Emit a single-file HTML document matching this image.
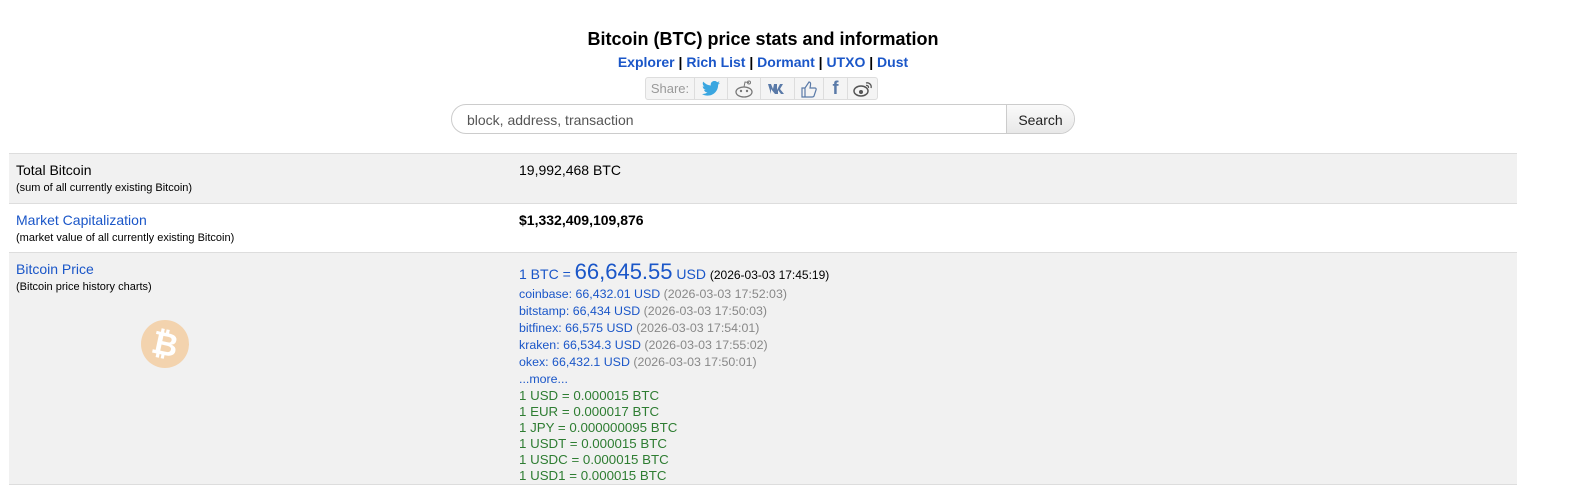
<!DOCTYPE html>
<html><head><meta charset="utf-8"><style>
body{margin:0;background:#fff;font-family:"Liberation Sans",Arial,sans-serif;color:#000;width:1584px;height:493px;overflow:hidden;position:relative}
a{color:#1a56c8;text-decoration:none}
.h{position:absolute;left:0;width:1526px;text-align:center}
h1{font-size:18px;margin:0;top:29px}
.nav{top:54px;font-size:14px;font-weight:bold}
.share{position:absolute;left:645px;top:77px;height:21px;border:1px solid #ddd;border-radius:3px;background:#f4f4f4;display:flex}
.share span{border-right:1px solid #ddd;display:flex;align-items:center;justify-content:center;height:21px}
.share span:last-child{border:none}
.search{position:absolute;left:451px;top:104px;width:622px;height:28px;border:1px solid #ccc;border-radius:15px;overflow:hidden;display:flex}
.search .in{flex:1;font-size:14px;color:#555;padding:7px 0 0 15px}
.search .b{width:67px;border-left:1px solid #ccc;background:linear-gradient(#fafafa,#e8e8e8);font-size:14px;padding-top:7px;text-align:center;color:#222}
table{position:absolute;left:9px;top:153px;width:1508px;border-collapse:collapse}
td{vertical-align:top;border-top:1px solid #ddd;border-bottom:1px solid #ddd;padding:8px 0 0 7px;font-size:14px}
td:nth-child(2){padding-left:5px}
small{font-size:11px}
.g{color:#888}
.gr{color:#2e7d32;font-size:13.3px;line-height:16px}
.ex{font-size:12.4px;line-height:17px;color:#1a56c8}
</style></head><body>
<h1 class="h">Bitcoin (BTC) price stats and information</h1>
<div class="h nav"><a>Explorer</a> | <a>Rich List</a> | <a>Dormant</a> | <a>UTXO</a> | <a>Dust</a></div>
<div class="share">
<span style="width:48px;font-size:13px;color:#999">Share:</span>
<span style="width:32px"><svg width="18" height="15" viewBox="0 0 24 20"><path d="M24 2.4a10 10 0 0 1-2.8.8A5 5 0 0 0 23.3.4a10 10 0 0 1-3.1 1.2A4.9 4.9 0 0 0 11.8 6 14 14 0 0 1 1.7.9a4.9 4.9 0 0 0 1.5 6.6A5 5 0 0 1 1 6.9a4.9 4.9 0 0 0 3.9 4.8 5 5 0 0 1-2.2.1 4.9 4.9 0 0 0 4.6 3.4A9.9 9.9 0 0 1 0 17.3 14 14 0 0 0 7.5 19.5c9 0 14-7.5 14-14v-.6A10 10 0 0 0 24 2.4z" fill="#3aa6e0"/></svg></span>
<span style="width:32px"><svg width="22" height="18" viewBox="0 0 22 18"><ellipse cx="11" cy="12" rx="8" ry="5" fill="none" stroke="#777" stroke-width="1.3"/><circle cx="8" cy="11" r="1.2" fill="#777"/><circle cx="14" cy="11" r="1.2" fill="#777"/><circle cx="16" cy="2.5" r="1.5" fill="none" stroke="#777"/><path d="M11 7 12 2l4 .5" fill="none" stroke="#777"/></svg></span>
<span style="width:33px"><svg width="22" height="12" viewBox="0 0 22 12"><path d="M1 1h3l2 5 1-5h3v6l3-6h3l-3 5 4 5h-3l-3-4v4h-3l-4-5v5H4z" fill="#5a7aa8"/></svg></span>
<span style="width:28px"><svg width="18" height="18" viewBox="0 0 18 18"><path d="M2 8h3v9H2zM5 8l4-6c1 0 2 1 1.5 3L10 8h5c1 0 1.5 1 1 2l-2 6c-.3.7-1 1-2 1H5" fill="none" stroke="#5a7aa8" stroke-width="1.2"/></svg></span>
<span style="width:23px;color:#5a7aa8;font-weight:bold;font-size:18px">f</span>
<span style="width:29px"><svg width="20" height="16" viewBox="0 0 20 16"><ellipse cx="8" cy="10" rx="7" ry="5" fill="none" stroke="#555" stroke-width="1.5"/><circle cx="8" cy="11" r="2" fill="#555"/><path d="M13 2a4 4 0 0 1 5 5M13 4.5a2 2 0 0 1 2.5 2.5" fill="none" stroke="#555" stroke-width="1.3"/></svg></span>
</div>
<div class="search"><div class="in">block, address, transaction</div><div class="b">Search</div></div>
<table>
<tr style="background:#f1f1f1;height:50px"><td style="width:498px">Total Bitcoin<br><small>(sum of all currently existing Bitcoin)</small></td><td>19,992,468 BTC</td></tr>
<tr style="height:49px"><td><a>Market Capitalization</a><br><small>(market value of all currently existing Bitcoin)</small></td><td><b>$1,332,409,109,876</b></td></tr>
<tr style="background:#f1f1f1;height:232px"><td><a>Bitcoin Price</a><br><small>(Bitcoin price history charts)</small>
<div style="margin:27px 0 0 125px;width:48px;height:48px;border-radius:50%;background:#f3d3ae;color:#fff;font-size:32px;font-weight:bold;text-align:center;line-height:48px;transform:rotate(12deg)">₿</div></td>
<td style="padding-top:8px"><div style="color:#1a56c8;line-height:22px"><span style="font-size:14px">1 BTC = </span><span style="font-size:22px">66,645.55</span> <span style="font-size:14px">USD</span> <span style="font-size:12px;color:#000">(2026-03-03 17:45:19)</span></div>
<div class="ex">coinbase: 66,432.01 USD <span class="g">(2026-03-03 17:52:03)</span><br>bitstamp: 66,434 USD <span class="g">(2026-03-03 17:50:03)</span><br>bitfinex: 66,575 USD <span class="g">(2026-03-03 17:54:01)</span><br>kraken: 66,534.3 USD <span class="g">(2026-03-03 17:55:02)</span><br>okex: 66,432.1 USD <span class="g">(2026-03-03 17:50:01)</span><br>...more...</div>
<div class="gr">1 USD = 0.000015 BTC<br>1 EUR = 0.000017 BTC<br>1 JPY = 0.000000095 BTC<br>1 USDT = 0.000015 BTC<br>1 USDC = 0.000015 BTC<br>1 USD1 = 0.000015 BTC</div></td></tr>
</table>
</body></html>
